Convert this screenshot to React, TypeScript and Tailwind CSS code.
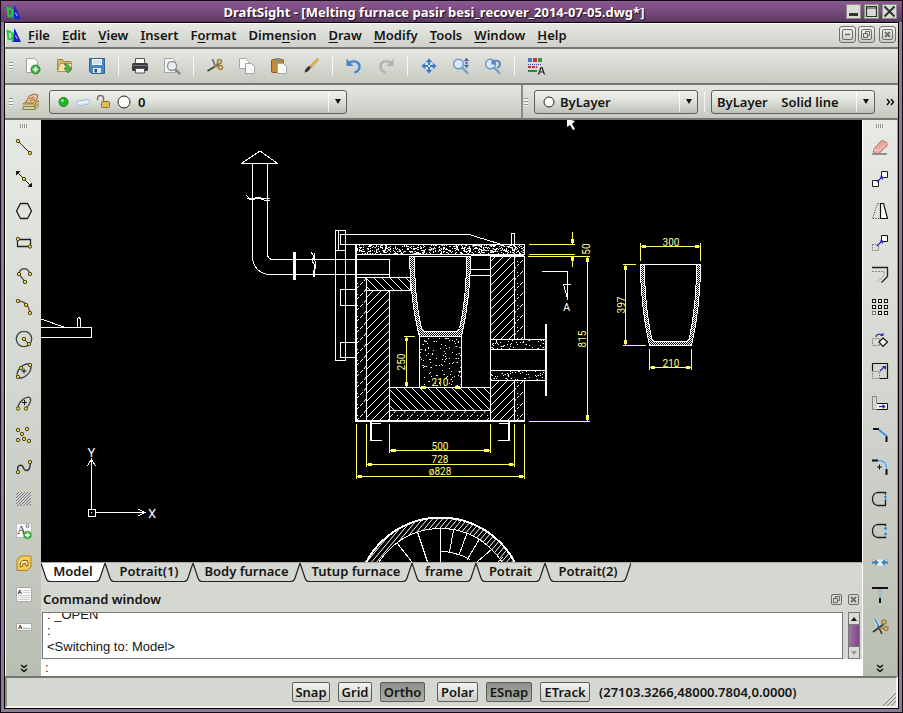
import { useId, type ReactNode } from "react";

const UI = "font-['Noto_Sans','Open_Sans',sans-serif]";

/* ---------- small drawing helpers ---------- */

function Icon({ children, size = 24 }: { children: ReactNode; size?: number }) {
  return (
    <svg width={size} height={size} viewBox="0 0 24 24" fill="none" aria-hidden="true">
      {children}
    </svg>
  );
}

function Node({ x, y }: { x: number; y: number }) {
  return <circle cx={x} cy={y} r="1.7" fill="#e8d44a" stroke="#4a4316" strokeWidth="1" />;
}

const BLUE = "#2a2ab8";

/* ---------- standard toolbar icons ---------- */

const Page = ({ x = 4, y = 4, w = 12, h = 15 }: { x?: number; y?: number; w?: number; h?: number }) => (
  <path d={`M${x + 0.5} ${y + 0.5}h${w - 4}l3 3v${h - 4}h-${w - 1}z`} fill="#fafafa" stroke="#a4a4a4" />
);

const Glass = ({ x, y }: { x: number; y: number }) => (
  <g>
    <path d={`M${x + 4} ${y + 4}l5 5`} stroke="#7d9cc4" strokeWidth="2.4" strokeLinecap="round" />
    <circle cx={x} cy={y} r="4.8" fill="#dceaf8" stroke="#6a97cb" strokeWidth="1.5" />
  </g>
);

const scissors = (
  <>
    <path d="M4.500 17L16 10" stroke="#444" strokeWidth="1.600" />
    <path d="M9.500 5L12.500 13" stroke="#777" strokeWidth="1.800" />
    <circle cx="16.500" cy="7.500" r="2" stroke="#a8813c" strokeWidth="1.600" />
    <circle cx="17.500" cy="13.500" r="2" stroke="#a8813c" strokeWidth="1.600" />
    <path d="M11.500 12.500h4M12.500 11.500l2.500-2.500" stroke="#a8813c" strokeWidth="1.600" />
  </>
);

const standardTools: ({ name: string; art: ReactNode } | "sep")[] = [
  {
    name: "New",
    art: (
      <>
        <Page x={5} />
        <circle cx="14.500" cy="15.500" r="4.500" fill="#45ab47" stroke="#2d8532" />
        <path d="M14.500 12.800v5.400M11.800 15.500h5.400" stroke="#fff" strokeWidth="1.6" />
      </>
    ),
  },
  {
    name: "Open",
    art: (
      <>
        <path d="M4.500 17V5.500h5l1.500 2h7V17z" fill="#d9b468" stroke="#a78646" />
        <path d="M4.500 17.500l2.500-8h12l-2 8z" fill="#f5e2ae" stroke="#b8954e" />
        <path d="M11 10c4-.5 5.500 1.500 5.500 4h2.500l-4 5-4-5h2.500c0-1.500-.8-2.500-2.500-4z" fill="#52b152" stroke="#2c7e31" strokeWidth=".8" />
      </>
    ),
  },
  {
    name: "Save",
    art: (
      <>
        <path d="M4.500 4.500h15v15h-13l-2-2z" fill="#4a87c0" stroke="#2d6096" />
        <path d="M7 5h10v6H7z" fill="#f4f7fa" />
        <path d="M8 7h8M8 9h8" stroke="#b7c4d0" />
        <path d="M8 14h8v5H8z" fill="#dde3ea" />
        <path d="M9.500 15h2.500v3.500H9.500z" fill="#31506f" />
      </>
    ),
  },
  "sep",
  {
    name: "Print",
    art: (
      <>
        <path d="M7.500 9V4.500h9V9" fill="#fafafa" stroke="#555" />
        <rect x="4" y="9" width="16" height="8" rx="1.500" fill="#3c3c40" />
        <path d="M4.500 11.500h15" stroke="#77777c" />
        <path d="M7.500 14.500h9v4.500h-9z" fill="#f6f6f6" stroke="#555" />
      </>
    ),
  },
  {
    name: "Print preview",
    art: (
      <>
        <Page x={4} />
        <path d="M15 15l4.500 4.500" stroke="#7e7e7e" strokeWidth="2.200" strokeLinecap="round" />
        <circle cx="12" cy="12" r="4.500" fill="#e9f0f6" stroke="#8b8f93" strokeWidth="1.300" />
      </>
    ),
  },
  "sep",
  { name: "Cut", art: scissors },
  {
    name: "Copy",
    art: (
      <>
        <Page x={4} y={4} w={10} h={11} />
        <Page x={10} y={9} w={10} h={11} />
      </>
    ),
  },
  {
    name: "Paste",
    art: (
      <>
        <rect x="4.500" y="5.500" width="12" height="13" rx="1" fill="#c58a38" stroke="#8d5f20" />
        <rect x="7.500" y="4" width="6" height="3.500" rx="1" fill="#8b8b86" />
        <Page x={10} y={9} w={10} h={11} />
      </>
    ),
  },
  {
    name: "Match properties",
    art: (
      <>
        <path d="M18.500 5.500L12 12.500" stroke="#d19a3c" strokeWidth="2.600" strokeLinecap="round" />
        <path d="M18.500 5.500L12.500 12" stroke="#f2cf82" strokeWidth="1" />
        <path d="M12 12l-2 2" stroke="#999" strokeWidth="2.600" />
        <path d="M11.500 13.500c-1 3-3 4.500-6 5 .5-3 2-5 4.500-6.500z" fill="#3c3026" />
      </>
    ),
  },
  "sep",
  {
    name: "Undo",
    art: (
      <>
        <path d="M7 9c5-3.500 10.500-1 10.500 3.500 0 3-2 5-5 6.300" stroke="#bcd6ef" strokeWidth="4.500" />
        <path d="M7 9c5-3.500 10.500-1 10.500 3.500 0 3-2 5-5 6.300" stroke="#4c86c4" strokeWidth="2.300" />
        <path d="M4.500 4.500v7.500h7z" fill="#4c86c4" />
      </>
    ),
  },
  {
    name: "Redo",
    art: (
      <>
        <path d="M17 9c-5-3.500-10.500-1-10.500 3.500 0 3 2 5 5 6.300" stroke="#b4b4b0" strokeWidth="2.600" />
        <path d="M19.500 4.500v7.500h-7z" fill="#b4b4b0" />
      </>
    ),
  },
  "sep",
  {
    name: "Pan",
    art: (
      <>
        <path d="M12 5v14M5 12h14" stroke="#cfe2f5" strokeWidth="5" />
        <path d="M12 4l4 4.500H8zM12 20l4-4.500H8zM4 12l4.500-4v8zM20 12l-4.500-4v8z" fill="#3f78bd" stroke="#cfe2f5" strokeWidth=".6" />
        <path d="M12 7v10M7 12h10" stroke="#3f78bd" strokeWidth="2" />
        <path d="M11 11h2v2h-2z" fill="#cfe2f5" />
      </>
    ),
  },
  {
    name: "Zoom dynamic",
    art: (
      <>
        <Glass x={9.500} y={10} />
        <path d="M17.500 4l2.200 3h-4.400zM17.500 14l2.200-3h-4.400z" fill="#3c6ca8" stroke="#3c6ca8" strokeWidth=".5" />
        <path d="M16.500 8h2v2h-2z" fill="#3c6ca8" />
      </>
    ),
  },
  {
    name: "Zoom previous",
    art: (
      <>
        <Glass x={9.500} y={10} />
        <path d="M12 8.500c2.500-3 7-2 7 1.500 0 2-1.500 3.500-3 4" stroke="#4d86c4" strokeWidth="1.800" />
        <path d="M10.500 5.500v5h5z" fill="#4d86c4" />
      </>
    ),
  },
  "sep",
  {
    name: "Properties",
    art: (
      <g shapeRendering="crispEdges">
        <path d="M4 4h4v4H4z" fill="#4d74c8" />
        <path d="M9 4h4v4H9z" fill="#c8323c" />
        <path d="M14 4h4v4h-4z" fill="#38963c" />
        <path d="M4 10.500h14" stroke="#4343b0" strokeDasharray="1 1" />
        <path d="M4 13h9" stroke="#c03038" strokeWidth="2" strokeDasharray="3 1" />
        <path d="M4 16.500h9" stroke="#2b8a30" strokeWidth="2" />
        <path d="M14.500 20.500l2.500-7h1l2.500 7M15.500 18h4" stroke="#222" strokeWidth="1.200" shapeRendering="auto" />
      </g>
    ),
  },
];

/* ---------- draw palette (left) ---------- */

const drawTools: { name: string; art: ReactNode }[] = [
  { name: "Line", art: <><path d="M6 6l12 12" stroke="#222" /><Node x={6} y={6} /><Node x={18} y={18} /></> },
  {
    name: "Infinite line",
    art: <><path d="M5 5l14 14" stroke="#222" /><path d="M4 4h4.500L4 8.500zM20 20h-4.500l4.500-4.500z" fill="#111" /><Node x={12} y={12} /></>,
  },
  { name: "Polygon", art: <path d="M4.500 12l4-7.500h7l4 7.500-4 7.500h-7z" stroke="#222" strokeWidth="1.300" /> },
  { name: "Rectangle", art: <><path d="M5.500 8.500h13v7h-13z" stroke="#222" strokeWidth="1.300" /><Node x={6} y={8} /><Node x={18} y={15.500} /></> },
  {
    name: "Polyline",
    art: <><path d="M13 19L7 11c1-7 9-7 11 0" stroke="#555" strokeWidth="1.300" /><Node x={7} y={11} /><Node x={18} y={11} /><Node x={13} y={19} /></>,
  },
  { name: "Arc", art: <><path d="M6 6c7 0 11 5 12 12" stroke="#775a5f" strokeWidth="1.400" /><Node x={6} y={6} /><Node x={14} y={10} /><Node x={18} y={18} /></> },
  { name: "Circle", art: <><circle cx="12" cy="12" r="7.700" stroke="#3d4a3f" strokeWidth="1.300" /><path d="M12 12l5 5" stroke="#222" /><Node x={12} y={12} /><Node x={17} y={17} /></> },
  {
    name: "Ellipse",
    art: (
      <>
        <ellipse cx="12" cy="12" rx="8.500" ry="5" transform="rotate(-45 12 12)" stroke="#444" strokeWidth="1.300" />
        <path d="M12 9.500v5M9.500 12h5" stroke="#111" />
        <Node x={6} y={18} /><Node x={18} y={6} /><Node x={9} y={9} />
      </>
    ),
  },
  {
    name: "Elliptical arc",
    art: (
      <>
        <path d="M6 17c0-6 9-13 12-10 2 2-1 8-4 10" stroke="#444" strokeWidth="1.300" />
        <path d="M12.500 9v5M10 11.500h5" stroke="#111" />
        <Node x={6} y={17.500} /><Node x={14} y={17.500} />
      </>
    ),
  },
  { name: "Points", art: <><Node x={6} y={7} /><Node x={15} y={6} /><Node x={10} y={11} /><Node x={6} y={17} /><Node x={12} y={16} /><Node x={17} y={18} /></> },
  { name: "Spline", art: <><path d="M6 17c-2-8 4-8 5.500-4S19 17 18 7" stroke="#333" strokeWidth="1.400" /><Node x={6} y={17} /><Node x={18} y={7} /></> },
  {
    name: "Hatch",
    art: (
      <>
        <path d="M4 5h15v14H4z" fill="#cfcfce" />
        <path d="M4 8l3-3M4 11l6-6M4 14l9-9M4 17l12-12M5 19L19 5M8 19L19 8M11 19l8-8M14 19l5-5M17 19l2-2" stroke="#77777a" />
      </>
    ),
  },
  {
    name: "Annotation",
    art: (
      <>
        <path d="M4.500 4.500h15v14h-15z" fill="#fafafa" stroke="#bbb" />
        <text x="5" y="14.500" fontSize="12" fontFamily="Liberation Serif" fontWeight="400" fill="#222">A</text>
        <circle cx="15.500" cy="7" r="1.500" stroke="#555" strokeWidth=".8" />
        <circle cx="15.500" cy="16" r="4.300" fill="#45ab47" />
        <path d="M15.500 13.500v5M13 16h5" stroke="#fff" strokeWidth="1.500" />
      </>
    ),
  },
  {
    name: "Block",
    art: (
      <>
        <path d="M9 5h10v11l-4 3.500H5V9z" fill="#f2cc56" stroke="#a98425" />
        <path d="M8 16l.5-4.500 2-2h5l.8 5-2.300.5-.5-2.500H11l-.5 3z" fill="#f9e8a8" stroke="#866a22" />
      </>
    ),
  },
  {
    name: "Note",
    art: (
      <>
        <path d="M4.500 4.500h15v14h-15z" fill="#fafafa" stroke="#aaa" />
        <text x="5.500" y="10.500" fontSize="6" fontWeight="700" fontFamily="Liberation Sans" fill="#111">A</text>
        <path d="M11 7.500h7M11 9.500h7M6 12.500h12M6 14.500h12M6 16.500h12" stroke="#c4c4c4" strokeWidth=".8" />
      </>
    ),
  },
  {
    name: "Simple note",
    art: (
      <>
        <path d="M4.500 8.500h15v7h-15z" fill="#fafafa" stroke="#aaa" />
        <text x="6" y="14" fontSize="6" fontWeight="700" fontFamily="Liberation Sans" fill="#111">A</text>
        <path d="M11 13.500h7" stroke="#aaa" />
      </>
    ),
  },
];

/* ---------- modify palette (right) ---------- */

const arrowNE = <><path d="M9 15l5-5" stroke={BLUE} strokeWidth="1.200" /><path d="M11.500 9.500H15V13z" fill={BLUE} /></>;

const modifyTools: { name: string; art: ReactNode }[] = [
  {
    name: "Delete",
    art: (
      <>
        <path d="M4 19h15" stroke="#777" strokeWidth="1.500" />
        <path d="M5.500 14.500l8-9 5.500 2v3l-8 8H7l-1.500-1.500z" fill="#eca6a0" stroke="#b76e69" />
        <path d="M5.500 14.500l5.500 1 8-8" stroke="#f8d5d1" />
      </>
    ),
  },
  { name: "Copy entities", art: <><path d="M4.500 13.500h6v6h-6zM13.500 4.500h6v6h-6z" fill="#fff" stroke="#222" />{arrowNE}</> },
  {
    name: "Mirror",
    art: <><path d="M12.500 4.500l3 0 4 15h-7z" fill="#fff" stroke="#111" strokeWidth="1.200" /><path d="M10.500 4.500l-1 0-5 15h8" stroke="#222" strokeDasharray="1 1.500" /></>,
  },
  { name: "Move", art: <><path d="M4.500 13.500h6v6h-6z" stroke="#777" strokeDasharray="1.500 1" /><path d="M13.500 4.500h6v6h-6z" fill="#fff" stroke="#111" />{arrowNE}</> },
  {
    name: "Offset",
    art: <><path d="M4 4.500h15.500v9l-6 6" stroke="#222" strokeWidth="1.300" /><path d="M4 8.500h12v4L9.500 19" stroke="#888" strokeDasharray="2 1" /></>,
  },
  {
    name: "Pattern",
    art: (
      <g shapeRendering="crispEdges">
        {[4, 10, 16].map((y) =>
          [4, 10, 16].map((x) => <rect key={`${x}-${y}`} x={x + 0.5} y={y + 0.5} width="3" height="3" fill="#fff" stroke={x === 4 && y === 16 ? "#777" : "#111"} />),
        )}
      </g>
    ),
  },
  {
    name: "Rotate",
    art: (
      <>
        <path d="M4.500 11.500h7v7h-7z" stroke="#777" strokeDasharray="1.500 1" />
        <path d="M15 11l4.500 4-4.500 4.500-4-4.500z" fill="#fff" stroke="#111" strokeWidth="1.200" />
        <path d="M8 10c0-3 5-4 6.500-1" stroke={BLUE} strokeWidth="1.200" /><path d="M12 9h3.500V5.500z" fill={BLUE} />
      </>
    ),
  },
  {
    name: "Scale",
    art: (
      <>
        <path d="M4.500 12V4.500h15v15H12" stroke="#111" strokeWidth="1.200" />
        <path d="M4.500 12.500h7v7h-7z" stroke="#777" strokeDasharray="1.500 1" />
        <path d="M12 12l4-4" stroke={BLUE} strokeWidth="1.200" /><path d="M14 7h4v4z" fill={BLUE} />
      </>
    ),
  },
  {
    name: "Stretch",
    art: (
      <>
        <path d="M10 18.500H4.500V5.500h4v6.500" stroke="#888" />
        <path d="M9 12.500h10.500v6H9" fill="#fff" stroke="#111" />
        <path d="M11 15.500h4" stroke={BLUE} strokeWidth="1.300" /><path d="M14.500 13l3.500 2.500-3.500 2.500z" fill={BLUE} />
      </>
    ),
  },
  {
    name: "Chamfer",
    art: <><path d="M5 6h6M18.500 13v6" stroke="#111" strokeWidth="2" /><path d="M11 7l7 6" stroke="#bcdcf3" strokeWidth="4" /><path d="M10.500 6.500l8 6.500" stroke="#4688c4" strokeWidth="1.800" /></>,
  },
  {
    name: "Fillet",
    art: (
      <>
        <path d="M4 5.500h6M18.500 14v6" stroke="#111" strokeWidth="2" />
        <path d="M10 6c6 0 8.500 3 8.500 8" stroke="#bcdcf3" strokeWidth="4" />
        <path d="M10 5.500c6 0 8.500 3 8.500 8" stroke="#73a2ce" strokeWidth="1.500" />
        <path d="M9 12h5M11.500 9.500v5" stroke="#111" />
      </>
    ),
  },
  { name: "Split at point", art: <><path d="M17.500 8V5.500H9c-6 2-6 11 0 13h8.500V12" stroke="#222" strokeWidth="1.300" /><circle cx="17.500" cy="10" r="2" fill="#4b86c0" stroke="#bcdcf3" /></> },
  {
    name: "Split",
    art: <><path d="M17.500 8V5.500H9c-6 2-6 11 0 13h8.500V17" stroke="#222" strokeWidth="1.300" /><circle cx="17.500" cy="9.500" r="2" fill="#4b86c0" stroke="#bcdcf3" /><circle cx="17.500" cy="15" r="2" fill="#4b86c0" stroke="#bcdcf3" /></>,
  },
  {
    name: "Weld",
    art: <><path d="M9 8.500h6v6H9z" fill="#e4f3fc" /><path d="M4 11.500h4M20 11.500h-4" stroke="#3d7fbd" strokeWidth="2" /><path d="M7 8.500l4 3-4 3zM17 8.500l-4 3 4 3z" fill="#3d7fbd" /></>,
  },
  { name: "Extend", art: <><path d="M4 5h16" stroke="#111" strokeWidth="2" /><path d="M12 7v8" stroke="#88b7dc" strokeWidth="2" strokeDasharray="2 1" /><path d="M12 15v5" stroke="#111" strokeWidth="2" /></> },
  {
    name: "Trim",
    art: <><path d="M7 4l4 8" stroke="#bcdcf3" strokeWidth="4" /><path d="M7 4l4 8" stroke="#4688c4" strokeWidth="1.500" /><path d="M5 17L16 9M10 11l4 8" stroke="#333" strokeWidth="1.600" /><path d="M11 12.500l5 1" stroke="#a8813c" strokeWidth="1.500" /><circle cx="16" cy="7" r="2" stroke="#a8813c" strokeWidth="1.600" /><circle cx="18" cy="13.500" r="2" stroke="#a8813c" strokeWidth="1.600" /></>,
  },
];

/* ---------- drawing area ---------- */

function noise(seed: number) {
  let s = seed;
  return () => {
    s = (s * 16807) % 2147483647;
    return s / 2147483647;
  };
}

function Speckle({ x, y, w, h, n, seed }: { x: number; y: number; w: number; h: number; n: number; seed: number }) {
  const r = noise(seed);
  let d = "";
  for (let i = 0; i < n; i++) {
    const px = Math.floor(x + r() * w);
    const py = Math.floor(y + r() * h);
    d += `M${px} ${py}h${r() > 0.75 ? 2 : 1}v1h-1z`;
  }
  return <path d={d} fill="#fff" />;
}

function Dim({ x, y, children, turn = false }: { x: number; y: number; children: ReactNode; turn?: boolean }) {
  return (
    <text
      x={x}
      y={y}
      textAnchor="middle"
      fontSize="10"
      fontWeight="400"
      fontFamily="Roboto, sans-serif"
      fill="#ffff80"
      transform={turn ? `rotate(-90 ${x} ${y})` : undefined}
    >
      {children}
    </text>
  );
}

function Drawing() {
  const id = useId();
  const slash = `${id}s`;
  const back = `${id}b`;
  const dash = `${id}d`;
  const fine = `${id}f`;
  const mesh = `${id}m`;
  const u = (k: string) => `url(#${k})`;
  return (
    <svg className="block size-full" viewBox="41 120 821 442" preserveAspectRatio="xMidYMid slice" fill="none" role="img" aria-label="Melting furnace section drawing">
      <defs>
        <pattern id={slash} width="8" height="8" patternUnits="userSpaceOnUse">
          <path d="M-1 9L9 -1M-1 1L1 -1M7 9L9 7" stroke="#fff" />
        </pattern>
        <pattern id={back} width="8" height="8" patternUnits="userSpaceOnUse">
          <path d="M-1 -1L9 9M-1 7L1 9M7 -1L9 1" stroke="#fff" />
        </pattern>
        <pattern id={dash} width="10" height="11" patternUnits="userSpaceOnUse">
          <path d="M0 10L3 7M4 6L6 3M7 2L9 0M7 9L8 8" stroke="#fff" />
        </pattern>
        <pattern id={fine} width="5" height="6" patternUnits="userSpaceOnUse">
          <path d="M0 6L5 0" stroke="#fff" />
        </pattern>
        <pattern id={mesh} width="2" height="2" patternUnits="userSpaceOnUse">
          <path d="M0 0h1v1H0zM1 1h1v1H1z" fill="#fff" />
        </pattern>
      </defs>

      <g stroke="#fff" shapeRendering="crispEdges">
        {/* chimney and flue */}
        <path d="M241 163.500H278M242 163l18-12 17 12" />
        <path d="M252.500 164V256c0 12 8 18.500 18 18.500H389M267.500 164V254c0 4 2 5.500 6 5.500H389.500V277" />
        <path d="M246 195l3 3 4 1 5-2 6 2 6-1M247 198l5 2 6-2 6 2 6 1" />
        <path d="M294.500 252v28" strokeWidth="3" />
        <path d="M311 252l3 4-2 5 4 6-3 5 1 5M315 253l-1 5 2 6-2 5 1 8" />

        {/* hinge bracket and lid lever */}
        <path d="M335.500 361V230.500h10V361M338.500 230v20M335 250.500h10M335 360.500h11M340.500 289.500h15v16h-15zM340.500 342.500h15v15h-15z" />
        <path d="M340.500 244V234.500H469l31 9.500M511.500 244v-11h3v11" />

        {/* lid */}
        <path d="M340 244.500H524.500V254.500H355.500V244M409 256.500h62M471 255.500h53" />
        <path d="M356 244V421" strokeWidth="2" />

        {/* walls */}
        <path fill={u(dash)} d="M356.500 277.500h10V420h-10z" />
        <path fill={u(slash)} d="M366.500 290.500h23V420h-23z" />
        <path fill={u(back)} d="M366.500 277.500h44v13h-44z" />
        <path fill={u(slash)} d="M490.500 256.500h24v83h-24zM490.500 380.500h24V420h-24z" />
        <path fill={u(dash)} d="M514.500 256.500h10v83h-10zM514.500 380.500h10V420h-10z" />
        <path d="M389.500 290V420M490.500 339v42M470 269.500h20M470 275.500h20" />

        {/* burner port */}
        <path d="M490 339.500h56M490 349.500h56M490 370.500h56M490 380.500h56" />
        <path d="M546 324v72" strokeWidth="2" />

        {/* floor */}
        <path fill={u(back)} d="M389.500 387.500h101v23h-101z" />
        <path fill={u(dash)} d="M389.500 410.500h101V420h-101z" />
        <path d="M355 421H525" strokeWidth="2" />
        <path d="M371 422v19M509 422v19" strokeWidth="2" />
        <path d="M371 423.500h10M371 440.500h11M499 423.500h10M498 440.500h11" />

        {/* stand */}
        <path d="M419.500 336.500h42v51h-42z" />

        {/* crucible in furnace */}
        <path fill={u(mesh)} d="M409.500 256.500h5c0 28 3 55 7 72q1 3 4 3h30q3 0 4-3c4-17 7-44 7-72h4c0 30-4 58-9 80h-42c-6-22-9-50-10-80z" />
        <path d="M409 256.500h62" />

        {/* loose crucible */}
        <path fill={u(mesh)} d="M640.500 264.500h4c0 28 3 55 7 73q1 4 5 4h28q4 0 5-4c4-18 7-45 7-73h4c0 30-4 59-9 81h-42c-5-22-9-51-9-81z" />
        <path d="M640 264.500h61" />

        {/* neighbouring part at the left edge */}
        <path d="M41 319l23 8M41 327.500H91.500V337.500H41M77.500 327v-8l1.500-2 1.500 2v8" />

        {/* section mark */}
        <path d="M542 271.500h25.500V300M563 284.500h8M563.500 284l4 15" />
      </g>

      <Speckle x={357} y={245} w={167} h={9} n={540} seed={71} />
      <Speckle x={420} y={338} w={41} h={48} n={110} seed={17} />
      <Speckle x={491} y={340} w={54} h={9} n={45} seed={29} />
      <Speckle x={491} y={371} w={54} h={9} n={45} seed={53} />

      {/* plan view */}
      <g stroke="#fff" shapeRendering="crispEdges">
        <circle cx="440.500" cy="601.500" r="79" strokeWidth="11" stroke={u(fine)} />
        <circle cx="440.500" cy="601.500" r="84" strokeWidth="2" />
        <circle cx="440.500" cy="601.500" r="73" />
        <path d="M440.500 528v34M440.500 551.500c11 0 20 3 30 8M417.500 532l10 30M397 543l15 19M453.500 530l-4 22M467 533l-8 22M479 540l-12 20M492 549l-15 13M503 557l-5 5" />
      </g>

      {/* coordinate system marker */}
      <g stroke="#fff" shapeRendering="crispEdges">
        <path d="M88.500 509.500h7v7h-7zM91.500 512v1M91.500 509V460M87.500 466l4-7 4 7M95 512.500h50M138 509l7 3.500-7 3.500" />
      </g>
      <g fill="#fff" fontFamily="Roboto, sans-serif" fontWeight="400" textAnchor="middle">
        <text x="91.500" y="457" fontSize="13">Y</text>
        <text x="152" y="518" fontSize="13">X</text>
        <text x="566.500" y="311" fontSize="11">A</text>
      </g>

      {/* dimensions */}
      <g stroke="#ffff66" shapeRendering="crispEdges">
        <path d="M389.500 424v29M490.500 424v29M389 450.500h102M366.500 424v43M514.500 424v43M366 464.500h149M356.500 424v55M524.500 424v55M356 476.500h169" />
        <path d="M404 336.500h11M406.500 336v51M529 244.500h46M529 254.500h46M528 256.500h62M529 421.500h61M587.500 256V421M572.500 232v12M572.500 256v11" />
        <path d="M640.500 243v18M700.500 243v18M640 246.500h61M623 264.500h13M623 345.500h23M625.500 264v82M649.500 349v21M691.500 349v21M649 367.500h43" />
        <path
          strokeWidth="3"
          d="M391 450.500h5M484 450.500h5M368 464.500h4M509 464.500h4M358 476.500h4M519 476.500h4M421 387.500h5M455 387.500h5M642 246.500h4M695 246.500h4M651 367.500h4M686 367.500h4M587.500 258v4M587.500 415v5M572.500 239v4M572.500 257v4M406.500 338v3M406.500 382v4M625.500 266v4M625.500 340v4"
        />
      </g>
      <Dim x={440} y={450}>500</Dim>
      <Dim x={440} y={463}>728</Dim>
      <Dim x={440} y={475}>ø828</Dim>
      <Dim x={440} y={386}>210</Dim>
      <Dim x={671} y={246}>300</Dim>
      <Dim x={671} y={367}>210</Dim>
      <Dim x={405} y={362} turn>250</Dim>
      <Dim x={590} y={249} turn>50</Dim>
      <Dim x={586} y={339} turn>815</Dim>
      <Dim x={625} y={305} turn>397</Dim>

      {/* pointer */}
      <path d="M567 119l8 2-3 3 3 5-2 1-3-5-3 2z" fill="#fff" />
    </svg>
  );
}

/* ---------- chrome parts ---------- */

function Grip({ vertical = false }: { vertical?: boolean }) {
  return vertical ? (
    <span className="mt-1 mb-[3px] h-1 w-2 shrink-0 bg-[repeating-linear-gradient(90deg,#8f918b_0_1px,#f4f5f1_1px_2px)]" />
  ) : (
    <span className="mr-1 h-2 w-1 shrink-0 bg-[repeating-linear-gradient(180deg,#8f918b_0_1px,#f4f5f1_1px_3px)]" />
  );
}

function Combo({ label, value, className, children }: { label: string; value: string; className: string; children?: ReactNode }) {
  return (
    <div className={`flex h-6 items-center rounded-[3px] border border-[#5d605a] bg-linear-to-b from-[#f1f2ee] via-[#dcdfd8] to-[#bcc1b6] ${className}`}>
      {children}
      <select aria-label={label} className="h-full min-w-0 flex-1 appearance-none bg-transparent p-0 outline-none">
        <option>{value}</option>
      </select>
      <span className="flex h-5 w-[18px] items-center justify-center border-l border-white/80">
        <svg width="6" height="5" viewBox="0 0 6 5" aria-hidden="true"><path d="M0 0h6L3 5z" fill="#111" /></svg>
      </span>
    </div>
  );
}

function Palette({ label, tools, side }: { label: string; tools: { name: string; art: ReactNode }[]; side: string }) {
  return (
    <div role="toolbar" aria-label={label} className={`flex w-9 shrink-0 flex-col items-center bg-linear-to-b from-[#e8e9e4] via-[#d3d6cf] to-[#b9beb3] ${side}`}>
      <Grip vertical />
      {tools.map((t) => (
        <button key={t.name} aria-label={t.name} className="flex h-8 w-8 shrink-0 items-center justify-center">
          <Icon>{t.art}</Icon>
        </button>
      ))}
      <button aria-label="More tools" className="mt-auto mb-[2px] flex h-3 w-4 items-center justify-center">
        <svg width="8" height="9" viewBox="0 0 8 9" fill="none" stroke="#111" strokeWidth="1.500" aria-hidden="true"><path d="M1 1l3 2.500L7 1M1 5l3 2.500L7 5" /></svg>
      </button>
    </div>
  );
}

const tabs = [
  { name: "Model", w: "w-16", active: true },
  { name: "Potrait(1)", w: "w-[88px]" },
  { name: "Body furnace", w: "w-[107px]" },
  { name: "Tutup furnace", w: "w-[112px]" },
  { name: "frame", w: "w-16" },
  { name: "Potrait", w: "w-[69px]" },
  { name: "Potrait(2)", w: "w-[86px]" },
];

function Tab({ name, w, active }: { name: string; w: string; active?: boolean }) {
  const fill = active ? "#fff" : "#d5d7d1";
  return (
    <button role="tab" aria-selected={!!active} className={`flex h-5 shrink-0 ${w}`}>
      <svg className="shrink-0" width="9" height="20" viewBox="0 0 9 20" aria-hidden="true">
        <path d="M0 0L5 15Q6 18.500 9 18.500V0z" fill={fill} />
        <path d="M0 0L5 15Q6 18.500 9 18.500" fill="none" stroke="#222" strokeWidth="1.200" />
      </svg>
      <span className={`flex h-[19px] min-w-0 flex-1 items-center justify-center border-b border-[#222] pb-[2px] whitespace-nowrap ${active ? "bg-white" : "bg-[#d5d7d1]"}`}>{name}</span>
      <svg className="shrink-0" width="9" height="20" viewBox="0 0 9 20" aria-hidden="true">
        <path d="M9 0L4 15Q3 18.500 0 18.500V0z" fill={fill} />
        <path d="M9 0L4 15Q3 18.500 0 18.500" fill="none" stroke="#222" strokeWidth="1.200" />
      </svg>
    </button>
  );
}

const menus: [string, string, string][] = [
  ["", "F", "ile"],
  ["", "E", "dit"],
  ["", "V", "iew"],
  ["", "I", "nsert"],
  ["F", "o", "rmat"],
  ["Dime", "n", "sion"],
  ["", "D", "raw"],
  ["", "M", "odify"],
  ["", "T", "ools"],
  ["", "W", "indow"],
  ["", "H", "elp"],
];

const modes = [
  { name: "Snap", w: "w-[38px]", on: false },
  { name: "Grid", w: "w-[34px]", on: false },
  { name: "Ortho", w: "w-[45px] mr-1", on: true },
  { name: "Polar", w: "w-[41px]", on: false },
  { name: "ESnap", w: "w-[46px]", on: true },
  { name: "ETrack", w: "w-[50px]", on: false },
];

function Logo({ size }: { size: number }) {
  return (
    <svg className="shrink-0" width={size} height={size} viewBox="0 0 16 16" aria-hidden="true">
      <path d="M1.500 4l3 1c2.500 1.500 2.500 5.500 0 7.500L2.500 12z" fill="none" stroke="#22cc3a" strokeWidth="2" />
      <path d="M8.500 1L15 15H6z" fill="#1a22c8" />
      <path d="M7 5.500v9" stroke="#35d548" strokeWidth="1.300" />
      <path d="M9 9c2 0 1 2 2.500 3" stroke="#cfd4ff" fill="none" />
    </svg>
  );
}

function CaptionButton({ name, children }: { name: string; children: ReactNode }) {
  return (
    <button aria-label={name} className="flex size-[15px] items-center justify-center border border-[#8e9089] bg-[#d9dbd5]">
      <svg width="13" height="13" viewBox="0 0 13 13" fill="none" stroke="#2f352c" aria-hidden="true">{children}</svg>
    </button>
  );
}

function MdiButton({ name, plain, children }: { name: string; plain?: boolean; children: ReactNode }) {
  return (
    <button
      aria-label={name}
      className={plain ? "flex size-[11px] items-center justify-center" : "flex size-[17px] items-center justify-center rounded-[3px] border border-[#6f726b] bg-linear-to-b from-[#f3f4f0] to-[#c9ccc4]"}
    >
      <svg width="11" height="11" viewBox="0 0 11 11" fill="none" stroke="#6a6d66" aria-hidden="true">
        <rect x=".5" y=".5" width="10" height="10" rx="1.500" />
        {children}
      </svg>
    </button>
  );
}

const restoreArt = <path d="M4.500 4.500v-2h4v4h-2M2.500 4.500h4v4h-4z" />;
const closeArt = <path d="M3 3l5 5M8 3L3 8" strokeWidth="1.800" />;

export default function App() {
  return (
    <div className={`flex h-screen min-h-[700px] flex-col border border-[#120a16] bg-[#8e7c94] text-[13px] leading-4 font-semibold text-[#151515] ${UI}`}>
      {/* title bar */}
      <header className="flex h-[21px] shrink-0 items-center bg-linear-to-b from-[#8a5a90] via-[#774a7b] to-[#5c3a62] pr-[5px] pl-[5px]">
        <Logo size={16} />
        <h1 className="flex-1 text-center text-[13px] font-bold text-white [text-shadow:1px_1px_1px_#1a0d1d]">
          DraftSight - [Melting furnace pasir besi_recover_2014-07-05.dwg*]
        </h1>
        <div className="flex gap-[3px]">
          <CaptionButton name="Minimize"><path d="M2 9.500h9" strokeWidth="3" /></CaptionButton>
          <CaptionButton name="Maximize"><path d="M1.500 1.500h10v10h-10zM1 3h11" strokeWidth="1.200" /></CaptionButton>
          <CaptionButton name="Close"><path d="M1.500 1.500l10 10M11.500 1.500l-10 10" strokeWidth="2" /></CaptionButton>
        </div>
      </header>

      <div className="mx-[3px] mb-[3px] flex min-h-0 flex-1 flex-col border border-black bg-[#d5d7d1]">
        {/* menu bar */}
        <div className="flex h-6 shrink-0 items-center border-t border-l border-white bg-linear-to-b from-[#e6e7e2] to-[#cfd2ca] pr-[2px] pb-[2px]">
          <Logo size={16} />
          <nav className="flex flex-1 gap-3 pl-[6px]">
            {menus.map(([a, k, b]) => (
              <button key={a + k + b} className="whitespace-nowrap">
                {a}<span className="underline underline-offset-2">{k}</span>{b}
              </button>
            ))}
          </nav>
          <div className="flex gap-[2px]">
            <MdiButton name="Minimize document"><path d="M3 5.500h5" strokeWidth="1.500" /></MdiButton>
            <MdiButton name="Restore document">{restoreArt}</MdiButton>
            <span className="w-0" />
            <MdiButton name="Close document">{closeArt}</MdiButton>
          </div>
        </div>

        {/* standard toolbar */}
        <div role="toolbar" aria-label="Standard" className="flex h-9 shrink-0 items-center border-t-2 border-[#74766f] bg-linear-to-b from-[#e6e7e2] to-[#c6cac0] pl-1">
          <Grip />
          {standardTools.map((t, i) =>
            t === "sep" ? (
              <span key={i} className="mx-[5px] h-5 w-px bg-[#f6f7f4]" />
            ) : (
              <button key={t.name} aria-label={t.name} className="flex size-8 items-center justify-center"><Icon>{t.art}</Icon></button>
            ),
          )}
        </div>

        {/* layers and properties toolbars */}
        <div className="flex h-[37px] shrink-0 border-y-2 border-[#74766f] bg-linear-to-b from-[#e6e7e2] to-[#c6cac0]">
          <div className="flex min-w-0 flex-1 items-center pl-1">
            <Grip />
            <button aria-label="Layers manager" className="mr-1 flex size-7 items-center justify-center">
              <Icon>
                <path d="M4 14l4-3h12l-4 3zM4 16.500l12 0 4-3" fill="#e8d27a" stroke="#8f7a2c" />
                <path d="M4 19.500h12l4-4M4 17v2.500M16 14v5.500" stroke="#8f7a2c" />
                <path d="M7 12l3-6 5-2 4 1-1 4-4 4H8z" fill="#eec29a" stroke="#9d6b45" />
                <path d="M10 9l5-2M11 11l5-2" stroke="#9d6b45" />
              </Icon>
            </button>
            <Combo label="Layer" value="0" className="w-[298px] pl-2">
              <svg className="mr-1 shrink-0" width="76" height="18" viewBox="0 0 76 18" fill="none" aria-hidden="true">
                <circle cx="5.500" cy="9" r="4.500" fill="#22b528" stroke="#14801a" />
                <circle cx="4.500" cy="7.500" r="1.500" fill="#8bec8c" />
                <path d="M19 11c-1-3 2-4 6-3.500 3-1.500 7-1 7 1 0 3-3 3-6 2.500-2 2-6 2-7 0z" fill="#e2f0fb" stroke="#8fb6dc" />
                <rect x="43.500" y="8.500" width="8" height="6" rx="1" fill="#e3bd55" stroke="#8d7028" />
                <path d="M39.500 7.500V5.500a3 3 0 0 1 6 0V9" stroke="#777" strokeWidth="1.500" />
                <circle cx="66" cy="9" r="6" fill="#fff" stroke="#222" />
              </svg>
            </Combo>
          </div>
          <div className="flex shrink-0 items-center border-l-2 border-[#8a8c85] pl-px">
            <Grip />
            <Combo label="Line color" value="ByLayer" className="ml-[2px] w-[164px] pl-[7px]">
              <svg className="mr-1 shrink-0" width="14" height="14" viewBox="0 0 14 14" aria-hidden="true"><circle cx="7" cy="7" r="5" fill="#fff" stroke="#222" /></svg>
            </Combo>
            <span className="mx-[6px] h-5 w-px bg-[#f6f7f4]" />
            <Combo label="Line style" value={"ByLayer\u00a0\u00a0\u00a0\u00a0Solid line"} className="w-[164px] pl-[5px]" />
            <button aria-label="More toolbars" className="flex h-7 w-[23px] items-center justify-center pl-2">
              <svg width="9" height="8" viewBox="0 0 9 8" fill="none" stroke="#111" strokeWidth="1.500" aria-hidden="true"><path d="M1 1l2.500 3L1 7M5 1l2.500 3L5 7" /></svg>
            </button>
          </div>
        </div>

        {/* workspace */}
        <div className="flex min-h-0 flex-1">
          <Palette label="Draw" tools={drawTools} side="border-l border-white" />
          <main className="flex min-w-0 flex-1 flex-col">
            <div className="min-h-0 flex-1 overflow-hidden bg-black"><Drawing /></div>
            <div role="tablist" aria-label="Sheets" className="flex h-5 shrink-0 overflow-hidden border-t border-[#a9aba5]">
              {tabs.map((t) => <Tab key={t.name} {...t} />)}
            </div>
            <section aria-label="Command window" className="shrink-0">
              <div className="mt-[7px] flex h-5 items-center gap-[6px] pr-[3px] pl-[2px]">
                <h2 className="flex-1">Command window</h2>
                <MdiButton name="Float command window" plain>{restoreArt}</MdiButton>
                <MdiButton name="Close command window" plain>{closeArt}</MdiButton>
              </div>
              <div className="mt-[3px] flex h-[47px] bg-[#d5d7d1]">
                <div className="ml-px flex min-w-0 flex-1 flex-col justify-end overflow-hidden border border-[#777a73] bg-white px-1 pb-[3px] font-['Liberation_Sans',Arial,sans-serif] text-[13px] leading-4 font-normal">
                  <p>: _OPEN</p>
                  <p>:</p>
                  <p>&lt;Switching to: Model&gt;</p>
                </div>
                <div className="mr-[2px] ml-[5px] flex w-3 flex-col border border-[#777a73] bg-[#d9dbd5]">
                  <button aria-label="Scroll up" className="flex h-3 items-center justify-center border-b border-[#777a73]"><svg width="6" height="4" viewBox="0 0 6 4" aria-hidden="true"><path d="M0 4h6L3 0z" fill="#111" /></svg></button>
                  <span className="flex-1 bg-linear-to-r from-[#a271a8] to-[#7c4a84]" />
                  <button aria-label="Scroll down" className="flex h-3 items-center justify-center border-t border-[#777a73]"><svg width="6" height="4" viewBox="0 0 6 4" aria-hidden="true"><path d="M0 0h6L3 4z" fill="#999" /></svg></button>
                </div>
              </div>
              <input aria-label="Command" defaultValue=":" className="block h-[17px] w-full bg-white px-1 font-['Liberation_Sans',Arial,sans-serif] text-[13px] font-normal outline-none" />
            </section>
          </main>
          <Palette label="Modify" tools={modifyTools} side="border-l border-white border-r border-r-[#9a9c95]" />
        </div>

        {/* status bar */}
        <footer className="flex h-8 shrink-0 items-center border-2 border-t-[#74766f] border-r-[#f3f4f1] border-b-[#f3f4f1] border-l-[#8a8c85] pr-0 pl-[285px]">
          <div className="flex gap-2">
            {modes.map((m) => (
              <button
                key={m.name}
                aria-pressed={m.on}
                className={`h-5 shrink-0 rounded-[2px] border border-[#5d605a] bg-linear-to-b text-center leading-4 whitespace-nowrap ${m.w} ${m.on ? "from-[#8d9187] to-[#a9ada3]" : "from-[#f4f5f2] to-[#c8ccc2]"}`}
              >
                {m.name}
              </button>
            ))}
          </div>
          <output className="ml-[9px] flex-1">(27103.3266,48000.7804,0.0000)</output>
          <svg className="self-end" width="14" height="14" viewBox="0 0 14 14" stroke="#7d8078" aria-hidden="true"><path d="M1 14L14 1M5 14l9-9M9 14l5-5" /></svg>
        </footer>
      </div>
    </div>
  );
}
